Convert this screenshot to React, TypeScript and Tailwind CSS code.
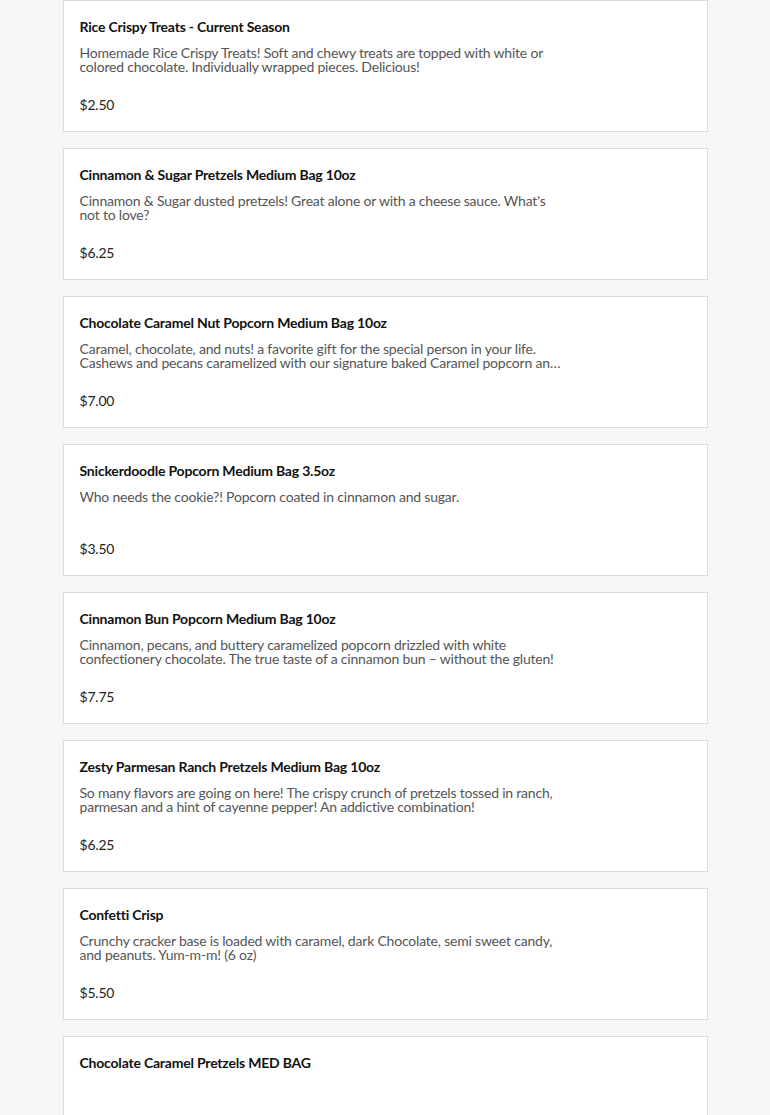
const items = [
  {
    name: "Rice Crispy Treats - Current Season",
    description:
      "Homemade Rice Crispy Treats! Soft and chewy treats are topped with white or colored chocolate. Individually wrapped pieces. Delicious!",
    price: "$2.50",
  },
  {
    name: "Cinnamon & Sugar Pretzels Medium Bag 10oz",
    description:
      "Cinnamon & Sugar dusted pretzels! Great alone or with a cheese sauce. What's not to love?",
    price: "$6.25",
  },
  {
    name: "Chocolate Caramel Nut Popcorn Medium Bag 10oz",
    description:
      "Caramel, chocolate, and nuts! a favorite gift for the special person in your life. Cashews and pecans caramelized with our signature baked Caramel popcorn and drizzled with chocolate.",
    price: "$7.00",
  },
  {
    name: "Snickerdoodle Popcorn Medium Bag 3.5oz",
    description: "Who needs the cookie?! Popcorn coated in cinnamon and sugar.",
    price: "$3.50",
  },
  {
    name: "Cinnamon Bun Popcorn Medium Bag 10oz",
    description:
      "Cinnamon, pecans, and buttery caramelized popcorn drizzled with white confectionery chocolate. The true taste of a cinnamon bun – without the gluten!",
    price: "$7.75",
  },
  {
    name: "Zesty Parmesan Ranch Pretzels Medium Bag 10oz",
    description:
      "So many flavors are going on here! The crispy crunch of pretzels tossed in ranch, parmesan and a hint of cayenne pepper! An addictive combination!",
    price: "$6.25",
  },
  {
    name: "Confetti Crisp",
    description:
      "Crunchy cracker base is loaded with caramel, dark Chocolate, semi sweet candy, and peanuts. Yum-m-m! (6 oz)",
    price: "$5.50",
  },
  {
    name: "Chocolate Caramel Pretzels MED BAG",
    description: "",
    price: "$6.50",
  },
];

function MenuCard({ name, description, price }: { name: string; description: string; price: string }) {
  return (
    <div className="border border-[#dcdcdc] bg-white px-4 py-4">
      <h3 className="text-[14px] leading-[20px] font-bold text-[#111]">{name}</h3>
      <p className="mt-[9px] min-h-[30px] w-[482px] pb-[2px] text-[14px] leading-[14px] text-[#555] line-clamp-2">
        {description}
      </p>
      <p className="mt-[19px] text-[14px] leading-[20px] text-[#222]">{price}</p>
    </div>
  );
}

export default function App() {
  return (
    <div
      className="min-h-screen bg-[#f5f6f7] tracking-[-0.2px]"
      style={{ fontFamily: "Lato, 'Noto Sans', sans-serif" }}
    >
      <div className="mx-auto flex w-[645px] flex-col gap-4 pb-8">
        {items.map((item) => (
          <MenuCard key={item.name} {...item} />
        ))}
      </div>
    </div>
  );
}
